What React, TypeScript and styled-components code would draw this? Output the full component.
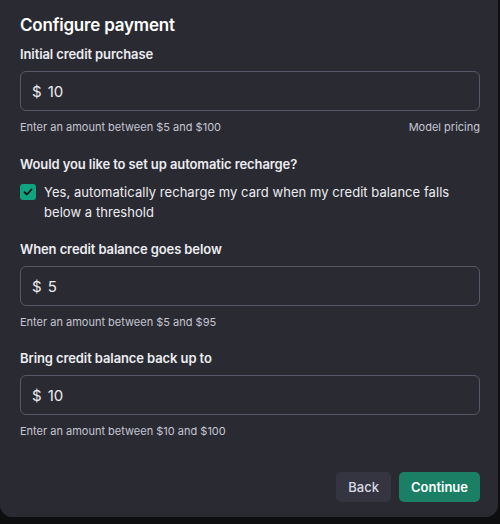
import React from "react";
import styled, { createGlobalStyle } from "styled-components";

const Global = createGlobalStyle`
  html, body { margin: 0; padding: 0; background: #0e0e10; }
  body { font-family: Inter, "Noto Sans", sans-serif; -webkit-font-smoothing: antialiased; }
  * { box-sizing: border-box; }
`;

const Panel = styled.div`
  width: 498px;
  height: 517px;
  background: #2a2b32;
  border-radius: 0 0 12px 12px;
  padding: 13px 18px 15px 20px;
  display: flex;
  flex-direction: column;
  color: #ececf1;
`;

const Title = styled.h2`
  margin: 0;
  font-size: 17px;
  font-weight: 600;
  line-height: 24px;
  letter-spacing: -0.2px;
  color: #fff;
`;

const Field = styled.div<{ $top: number }>`
  display: flex;
  flex-direction: column;
  margin-top: ${(p) => p.$top}px;
`;

const Label = styled.div`
  font-size: 13px;
  font-weight: 600;
  line-height: 20px;
  letter-spacing: -0.1px;
  color: #ececf1;
`;

const InputBox = styled.div`
  margin-top: 7px;
  height: 40px;
  border: 1px solid #565869;
  border-radius: 6px;
  display: flex;
  align-items: center;
  padding-left: 11px;
  font-size: 15px;
  color: #ececf1;
  gap: 6px;
`;

const Helper = styled.div`
  margin-top: 8px;
  display: flex;
  justify-content: space-between;
  font-size: 11px;
  line-height: 16px;
  color: #c5c5d2;
  letter-spacing: 0;
`;

const CheckRow = styled.label`
  margin-top: 8px;
  display: flex;
  gap: 8px;
  align-items: flex-start;
  font-size: 13px;
  line-height: 20px;
  color: #ececf1;
  letter-spacing: 0.05px;
`;

const Box = styled.span`
  flex: none;
  width: 16px;
  height: 16px;
  margin-top: 2px;
  border-radius: 3px;
  background: #10a37f;
  display: flex;
  align-items: center;
  justify-content: center;
`;

const Footer = styled.div`
  margin-top: auto;
  display: flex;
  justify-content: flex-end;
  gap: 8px;
`;

const Button = styled.button<{ $primary?: boolean }>`
  height: 30px;
  padding: 0 12px;
  border: none;
  border-radius: 5px;
  font-family: inherit;
  font-size: 13px;
  font-weight: ${(p) => (p.$primary ? 600 : 500)};
  background: ${(p) => (p.$primary ? "#1a7f64" : "#343541")};
  color: ${(p) => (p.$primary ? "#fff" : "#d9d9e3")};
`;

const Amount = ({ value }: { value: string }) => (
  <InputBox>
    <span>$</span>
    <span>{value}</span>
  </InputBox>
);

export default function App() {
  return (
    <>
      <Global />
      <Panel>
        <Title>Configure payment</Title>
        <Field $top={7}>
          <Label>Initial credit purchase</Label>
          <Amount value="10" />
          <Helper>
            <span>Enter an amount between $5 and $100</span>
            <span>Model pricing</span>
          </Helper>
        </Field>
        <Field $top={19}>
          <Label>Would you like to set up automatic recharge?</Label>
          <CheckRow>
            <Box>
              <svg width="10" height="10" viewBox="0 0 10 10">
                <path d="M1.5 5.2 L3.9 7.5 L8.5 2.5" fill="none" stroke="#111" strokeWidth="1.8" strokeLinecap="round" strokeLinejoin="round" />
              </svg>
            </Box>
            <span>
              Yes, automatically recharge my card when my credit balance falls below a threshold
            </span>
          </CheckRow>
        </Field>
        <Field $top={17}>
          <Label>When credit balance goes below</Label>
          <Amount value="5" />
          <Helper>
            <span>Enter an amount between $5 and $95</span>
          </Helper>
        </Field>
        <Field $top={18}>
          <Label>Bring credit balance back up to</Label>
          <Amount value="10" />
          <Helper>
            <span>Enter an amount between $10 and $100</span>
          </Helper>
        </Field>
        <Footer>
          <Button>Back</Button>
          <Button $primary>Continue</Button>
        </Footer>
      </Panel>
    </>
  );
}
